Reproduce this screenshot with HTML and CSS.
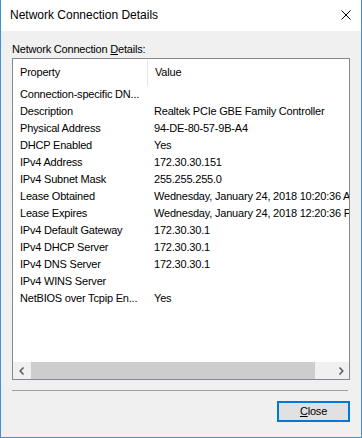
FILE: index.html
```html
<!DOCTYPE html>
<html>
<head>
<meta charset="utf-8">
<link rel="stylesheet" href="styles.css">
</head>
<body>
<div class="window">
  <div class="titlebar">
    <span class="title">Network Connection Details</span>
    <svg class="close-x" width="10" height="10" viewBox="0 0 10 10"><path d="M0.5 0.5 L9.5 9.5 M9.5 0.5 L0.5 9.5" stroke="#000" stroke-width="1" fill="none"/></svg>
  </div>
  <div class="content">
    <div class="label">Network Connection <u>D</u>etails:</div>
    <div class="listbox">
      <div class="header">
        <div class="hcell first">Property</div>
        <div class="hcell">Value</div>
      </div>
      <div class="rows">
        <div class="row"><div class="c1">Connection-specific DN...</div><div class="c2"></div></div>
        <div class="row"><div class="c1">Description</div><div class="c2">Realtek PCIe GBE Family Controller</div></div>
        <div class="row"><div class="c1">Physical Address</div><div class="c2">94-DE-80-57-9B-A4</div></div>
        <div class="row"><div class="c1">DHCP Enabled</div><div class="c2">Yes</div></div>
        <div class="row"><div class="c1">IPv4 Address</div><div class="c2">172.30.30.151</div></div>
        <div class="row"><div class="c1">IPv4 Subnet Mask</div><div class="c2">255.255.255.0</div></div>
        <div class="row"><div class="c1">Lease Obtained</div><div class="c2">Wednesday, January 24, 2018 10:20:36 AM</div></div>
        <div class="row"><div class="c1">Lease Expires</div><div class="c2">Wednesday, January 24, 2018 12:20:36 PM</div></div>
        <div class="row"><div class="c1">IPv4 Default Gateway</div><div class="c2">172.30.30.1</div></div>
        <div class="row"><div class="c1">IPv4 DHCP Server</div><div class="c2">172.30.30.1</div></div>
        <div class="row"><div class="c1">IPv4 DNS Server</div><div class="c2">172.30.30.1</div></div>
        <div class="row"><div class="c1">IPv4 WINS Server</div><div class="c2"></div></div>
        <div class="row"><div class="c1">NetBIOS over Tcpip En...</div><div class="c2">Yes</div></div>
      </div>
      <div class="hscroll">
        <div class="arrow"><svg width="6" height="8" viewBox="0 0 6 8"><path d="M4.5 0.5 L1.2 4 L4.5 7.5" stroke="#606060" stroke-width="1.6" fill="none"/></svg></div>
        <div class="track"><div class="thumb"></div></div>
        <div class="arrow"><svg width="6" height="8" viewBox="0 0 6 8"><path d="M1.5 0.5 L4.8 4 L1.5 7.5" stroke="#606060" stroke-width="1.6" fill="none"/></svg></div>
      </div>
    </div>
    <div class="separator"></div>
    <div class="buttons">
      <div class="btn"><u>C</u>lose</div>
    </div>
  </div>
</div>
</body>
</html>
```
FILE: styles.css
```css
html, body {
  margin: 0;
  padding: 0;
}
body {
  width: 362px;
  height: 438px;
  font-family: "Liberation Sans", Arial, sans-serif;
  color: #000;
}
.window {
  box-sizing: border-box;
  width: 362px;
  height: 438px;
  background: #f0f0f0;
  border-left: 1px solid #3f8fdb;
  border-right: 1px solid #3f8fdb;
  border-bottom: 1px solid #3f8fdb;
  display: flex;
  flex-direction: column;
}
.titlebar {
  height: 31px;
  background: #fff;
  display: flex;
  align-items: center;
  justify-content: space-between;
  padding-left: 9px;
  padding-right: 10px;
}
.title {
  font-size: 12px;
  line-height: 31px;
}
.close-x {
  display: block;
  margin-top: -1px;
}
.content {
  padding: 0 11px;
  font-size: 11px;
  letter-spacing: -0.2px;
}
.label {
  line-height: 13px;
  padding-top: 12px;
  margin-bottom: 2px;
}
.listbox {
  box-sizing: border-box;
  height: 322px;
  background: #fff;
  border: 1px solid #828790;
  display: flex;
  flex-direction: column;
  overflow: hidden;
}
.header {
  display: flex;
  height: 27px;
  flex: none;
}
.hcell {
  box-sizing: border-box;
  line-height: 27px;
  padding-left: 7px;
  white-space: nowrap;
}
.hcell.first {
  width: 135px;
  border-right: 1px solid #e5e5e5;
  margin: 1px 0 0 0;
  line-height: 25px;
  height: 26px;
}
.rows {
  flex: 1;
  overflow: hidden;
}
.row {
  display: flex;
  height: 17px;
  line-height: 17px;
  white-space: nowrap;
}
.c1 {
  box-sizing: border-box;
  width: 135px;
  flex: none;
  padding-left: 7px;
  overflow: hidden;
}
.c2 {
  padding-left: 6px;
  white-space: nowrap;
}
.hscroll {
  height: 17px;
  flex: none;
  display: flex;
  background: #f0f0f0;
}
.arrow {
  width: 17px;
  height: 17px;
  display: flex;
  align-items: center;
  justify-content: center;
  flex: none;
}
.arrow svg {
  display: block;
}
.track {
  flex: 1;
  padding: 0 1px;
  display: flex;
}
.thumb {
  width: 284px;
  height: 17px;
  background: #cdcdcd;
}
.separator {
  height: 1px;
  background: #a0a0a0;
  margin: 10px 2px 0 0;
}
.buttons {
  display: flex;
  justify-content: flex-end;
  margin-top: 10px;
}
.btn {
  box-sizing: border-box;
  width: 73px;
  height: 21px;
  border: 2px solid #0078d7;
  background: #e1e1e1;
  text-align: center;
  line-height: 17px;
  font-size: 11px;
}
```
